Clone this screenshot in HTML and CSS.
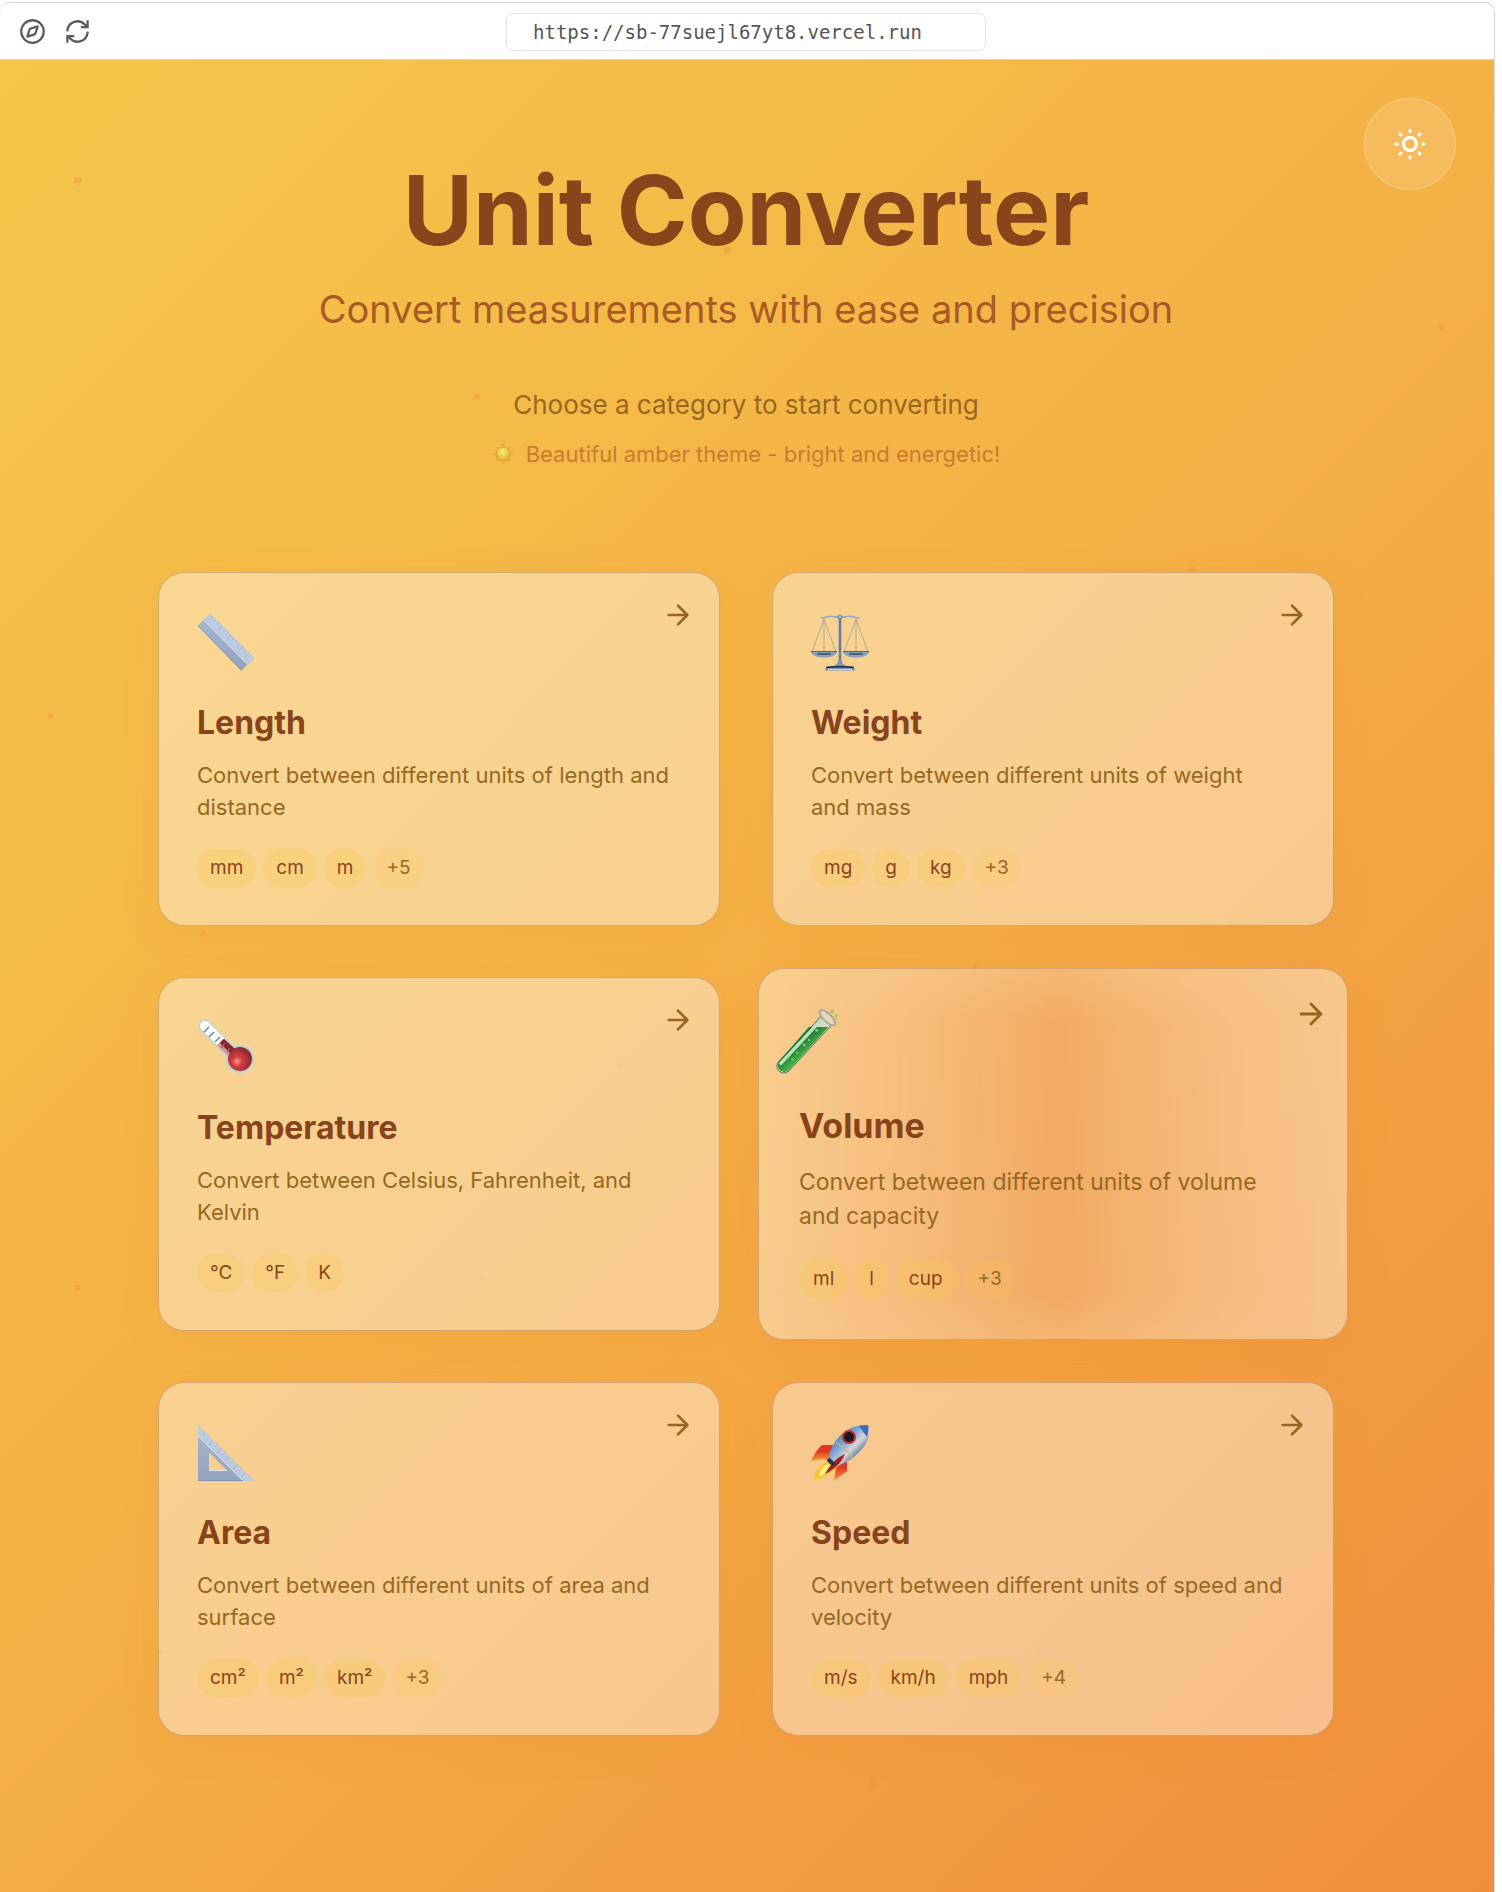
FILE: index.html
```html
<!DOCTYPE html>
<html lang="en">
<head>
<meta charset="utf-8">
<meta name="viewport" content="width=device-width, initial-scale=1">
<title>Unit Converter</title>
<link rel="stylesheet" href="styles.css">
</head>
<body>
<svg class="defs" aria-hidden="true">
  <defs>
    <symbol id="arrow" viewBox="0 0 24 24"><path d="M5 12h14M12 5l7 7-7 7" fill="none" stroke="currentColor" stroke-width="2" stroke-linecap="round" stroke-linejoin="round"/></symbol>
    <linearGradient id="steel" x1="0" y1="0" x2="0" y2="1"><stop offset="0" stop-color="#a9b8cf"/><stop offset="1" stop-color="#93a3bd"/></linearGradient>
    <radialGradient id="bulb" cx=".38" cy=".6" r=".6"><stop offset="0" stop-color="#f29a9a"/><stop offset=".35" stop-color="#d43c3f"/><stop offset="1" stop-color="#8d2a30"/></radialGradient>
    <linearGradient id="liquid" x1="0" y1="0" x2="1" y2="1"><stop offset=".4" stop-color="#1f7a34"/><stop offset=".6" stop-color="#4fc04a"/></linearGradient>
    <linearGradient id="hull" x1="0" y1="0" x2="1" y2="1"><stop offset=".2" stop-color="#3f78c0"/><stop offset=".42" stop-color="#7fa8d8"/><stop offset=".58" stop-color="#d4d8da"/><stop offset=".8" stop-color="#2d4d86"/></linearGradient>
    <linearGradient id="fin" x1="0" y1="0" x2="0" y2="1"><stop offset=".4" stop-color="#e03a22"/><stop offset="1" stop-color="#f5a03a"/></linearGradient>
    <radialGradient id="sunball" cx=".5" cy=".35" r=".6"><stop offset="0" stop-color="#f8ec7c"/><stop offset="1" stop-color="#e8b030"/></radialGradient>
  </defs>
</svg>
<div class="window">
  <header class="toolbar">
    <div class="toolbar-actions">
      <button class="tool" type="button" aria-label="Browse">
        <svg viewBox="0 0 24 24" fill="none" stroke="currentColor" stroke-width="2" stroke-linecap="round" stroke-linejoin="round"><circle cx="12" cy="12" r="10"/><path d="M16.6 7.4l-2 6.4a1.2 1.2 0 0 1-.8.8l-6.4 2 2-6.4a1.2 1.2 0 0 1 .8-.8z"/></svg>
      </button>
      <button class="tool" type="button" aria-label="Reload">
        <svg viewBox="0 0 24 24" fill="none" stroke="currentColor" stroke-width="2" stroke-linecap="square" stroke-linejoin="miter"><path d="M3 11a9 9 0 0 1 15.5-5.2L21 8M21 3v5h-5M21 13a9 9 0 0 1-15.5 5.2L3 16M3 21v-5h5"/></svg>
      </button>
    </div>
    <input class="address" type="text" aria-label="Address" value="https://sb-77suejl67yt8.vercel.run" readonly>
  </header>
  <main class="page">
    <svg class="particles" aria-hidden="true">
      <circle cx="5.2%" cy="6.6%" r="4"/><circle cx="48.7%" cy="10.4%" r="4"/><circle cx="96.5%" cy="14.6%" r="3"/><circle cx="31.9%" cy="18.4%" r="3"/><circle cx="79.8%" cy="27.8%" r="3"/><circle cx="3.4%" cy="35.8%" r="3"/><circle cx="13.6%" cy="47.7%" r="3"/><circle cx="82.3%" cy="47.2%" r="3"/><circle cx="65.3%" cy="49.5%" r="3"/><circle cx="41.5%" cy="54.9%" r="3"/><circle cx="32.3%" cy="66.5%" r="3"/><circle cx="5.2%" cy="67%" r="3"/><circle cx="10.7%" cy="86.9%" r="3"/><circle cx="69.5%" cy="86.9%" r="3"/><circle cx="82.4%" cy="87.6%" r="3"/><circle cx="58.5%" cy="94.1%" r="4"/>
    </svg>
    <button class="theme-toggle" type="button" aria-label="Switch theme">
      <svg viewBox="0 0 32 32" fill="none" stroke="currentColor" stroke-width="3" stroke-linecap="round"><circle cx="16" cy="16" r="6.5"/><path d="M16 2v1.500M16 28.500v1.500M2 16h1.500M28.500 16h1.500M6 6l1 1M25 25l1 1M6 26l1-1M25 7l1-1"/></svg>
    </button>
    <div class="intro">
      <h1>Unit Converter</h1>
      <p class="tagline">Convert measurements with ease and precision</p>
      <p class="prompt">Choose a category to start converting</p>
      <p class="note">
        <svg viewBox="0 0 22 22" aria-hidden="true"><g stroke="#dd9a3a" stroke-width="1" stroke-linecap="round"><path d="M11 1v2M11 19v2M1 11h2M19 11h2M4 4l1.5 1.5M16.5 16.5L18 18M4 18l1.500-1.500M16.500 5.500L18 4"/></g><circle cx="11" cy="11" r="7" fill="url(#sunball)" stroke="#d8932c" stroke-width=".8"/></svg>
        <span>Beautiful amber theme - bright and energetic!</span>
      </p>
    </div>
    <nav class="grid" aria-label="Categories">
      <a class="card" href="#length">
        <span class="card-head">
          <svg class="emoji" viewBox="0 0 58 58" aria-hidden="true"><path d="M1 12.5L13 .5 57 45 44.500 57.500z" fill="url(#steel)"/><path d="M6.500 7L13 .5 57 45l-6.500 6.500z" fill="#bccbe0"/><path d="M6.500 7l44 44.500" stroke="#d3deec"/><path d="M1 12.500l43.500 45" stroke="#7f91b0"/><path d="M16 4l-3 3M19 7l-2 2M22 10l-2 2M25 13l-4 4M28 16l-2 2M31 19l-2 2M34 22l-4 4M37 25l-2 2M40 28l-2 2M43 31l-4 4M46 34l-2 2M49 37l-2 2M52 40l-4 4" stroke="#93a6c4" stroke-width=".7"/></svg>
          <svg class="arrow" aria-hidden="true"><use href="#arrow"/></svg>
        </span>
        <span class="card-title">Length</span>
        <span class="card-text">Convert between different units of length and distance</span>
        <span class="units"><span class="unit">mm</span><span class="unit">cm</span><span class="unit">m</span><span class="unit more">+5</span></span>
      </a>
      <a class="card" href="#weight">
        <span class="card-head">
          <svg class="emoji" viewBox="0 0 58 58" aria-hidden="true"><g fill="none" stroke="#8c9a9f" stroke-width=".7"><path d="M13 6L1 39M13 6l12 33M13 6v33M45 6L33 39M45 6l12 33M45 6v33"/></g><path d="M9.500 5c6-.5 8-2.500 13-1.500 4 1 9 1 13 0 5-1 7 1 13 1.500" fill="none" stroke="#8aa8c8" stroke-width="1.600"/><path d="M29 5v47" stroke="#5e7fa8" stroke-width="2.600"/><circle cx="29" cy="4" r="2" fill="#a9bfd8" stroke="#54749c" stroke-width=".8"/><path d="M0 38.500h26c-1 4-6 6-13 6s-12-2-13-6zM32 38.500h26c-1 4-6 6-13 6s-12-2-13-6z" fill="#86a0be"/><path d="M0 38.500h26M32 38.500h26" stroke="#4c627e" stroke-width="1"/><path d="M6 41h14M38 41h14" stroke="#3d4856" stroke-width="1.400"/><path d="M28 45h2c1 5 2 7 6 8 6 0 8 2 8 4.500H14C14 55 16 53 22 53c4-1 5-3 6-8z" fill="#7b93b2"/><path d="M15 54.500c5-1 23-1 28 0" fill="none" stroke="#1d2b3d" stroke-width="1.500"/><path d="M17 56.500h24" stroke="#c5d4e8"/></svg>
          <svg class="arrow" aria-hidden="true"><use href="#arrow"/></svg>
        </span>
        <span class="card-title">Weight</span>
        <span class="card-text">Convert between different units of weight and mass</span>
        <span class="units"><span class="unit">mg</span><span class="unit">g</span><span class="unit">kg</span><span class="unit more">+3</span></span>
      </a>
      <a class="card" href="#temperature">
        <span class="card-head">
          <svg class="emoji" viewBox="0 0 58 58" aria-hidden="true"><path d="M8 8l31 31" stroke="#b9d3e2" stroke-width="13" stroke-linecap="round"/><circle cx="43" cy="41" r="14" fill="#b9d3e2"/><path d="M8 8l18 18" stroke="#fafcfd" stroke-width="10" stroke-linecap="round"/><path d="M23 24l17 16" stroke="#e39191" stroke-width="9"/><path d="M25 23l16 15" stroke="#8c2027" stroke-width="6"/><circle cx="43" cy="41" r="12" fill="url(#bulb)"/><path d="M12 9l-5 5M17 14l-5 5M23 19l-5 5M28 25l-4 5M33 30l-3 4" stroke="#68798a" stroke-width="1.300"/></svg>
          <svg class="arrow" aria-hidden="true"><use href="#arrow"/></svg>
        </span>
        <span class="card-title">Temperature</span>
        <span class="card-text">Convert between Celsius, Fahrenheit, and Kelvin</span>
        <span class="units"><span class="unit">°C</span><span class="unit">°F</span><span class="unit">K</span></span>
      </a>
      <a class="card card-active" href="#volume">
        <span class="card-head">
          <svg class="emoji" viewBox="0 0 64 68" aria-hidden="true"><path d="M8 59L52 12" stroke="#59806b" stroke-width="15" stroke-linecap="round"/><path d="M8 59L52 12" stroke="#dcd8c8" stroke-width="13" stroke-linecap="round"/><path d="M34 18.500h20L13 63C8 68-1 62 3 54z" fill="url(#liquid)"/><path d="M5 56L46 12" stroke="#b9e3c4" stroke-width="3.500" stroke-linecap="round"/><ellipse cx="53" cy="9" rx="10.500" ry="4" transform="rotate(45 53 9)" fill="#e8d9b8" stroke="#a3a3a0" stroke-width="1.800"/><g fill="#6fdc66"><circle cx="42" cy="22" r="1.500"/><circle cx="34" cy="32" r="1.300"/><circle cx="29" cy="37" r="1.500"/><circle cx="22" cy="45" r="1.200"/><circle cx="17" cy="52" r="1.200"/><circle cx="12" cy="51" r="1"/></g><g fill="#a3c95c"><circle cx="58" cy="2.500" r="2"/><circle cx="62" cy="7" r="1.500"/><circle cx="62" cy="10" r="1"/></g></svg>
          <svg class="arrow" aria-hidden="true"><use href="#arrow"/></svg>
        </span>
        <span class="card-title">Volume</span>
        <span class="card-text">Convert between different units of volume and capacity</span>
        <span class="units"><span class="unit">ml</span><span class="unit">l</span><span class="unit">cup</span><span class="unit more">+3</span></span>
      </a>
      <a class="card" href="#area">
        <span class="card-head">
          <svg class="emoji" viewBox="0 0 58 58" aria-hidden="true"><path d="M1 2v56h56zM12 29.500L30 47.500H12z" fill="url(#steel)" fill-rule="evenodd"/><path d="M1 2v11l45 45h11z" fill="#bccbe0"/><path d="M1 13l45 45" stroke="#d3deec"/><path d="M12 47.500h18" stroke="#dbe5f1"/><path d="M1 57.500h45" stroke="#7f91b8"/><path d="M8 10l-3 3M12 14l-2 2M16 18l-4 4M20 22l-2 2M24 26l-4 4M28 30l-2 2M32 34l-4 4M36 38l-2 2M40 42l-4 4M44 46l-2 2M48 50l-4 4" stroke="#93a6c4" stroke-width=".7"/></svg>
          <svg class="arrow" aria-hidden="true"><use href="#arrow"/></svg>
        </span>
        <span class="card-title">Area</span>
        <span class="card-text">Convert between different units of area and surface</span>
        <span class="units"><span class="unit">cm²</span><span class="unit">m²</span><span class="unit">km²</span><span class="unit more">+3</span></span>
      </a>
      <a class="card" href="#speed">
        <span class="card-head">
          <svg class="emoji" viewBox="0 0 58 58" aria-hidden="true"><path d="M23 22H11Q4 28 0 38l12-2 6 1z" fill="url(#fin)"/><path d="M36 36v12L23 58l2-13z" fill="url(#fin)"/><path d="M17 38C9 41 3 49 3 58c3-3 5-3 8-2 2-4 4-4 6-5 6-3 9-5 9-8z" fill="#f6c62f"/><path d="M17 41c-5 2-8 7-9 12 6-2 12-5 14-9z" fill="#fbf080"/><path d="M57 2c-14-1-26 6-33 17-4 6-6 12-7 18l7 6c10-2 18-7 24-14C57 20 60 12 57 2z" fill="url(#hull)"/><path d="M57 2c-3-.3-6 0-9 1l8 11c1-4 2-8 1-12z" fill="#3b6cb4"/><path d="M25 20c5 2 15 11 17 16" fill="none" stroke="#d8bb60" stroke-width="1.200"/><path d="M34 31c-8 3-16 12-20 20 8-4 16-10 20-20z" fill="#a51c1c"/><circle cx="38" cy="14" r="7" fill="#c32d2b"/><circle cx="38" cy="14" r="5" fill="#17191f"/><path d="M17 36l6 6" stroke="#24344c" stroke-width="4"/></svg>
          <svg class="arrow" aria-hidden="true"><use href="#arrow"/></svg>
        </span>
        <span class="card-title">Speed</span>
        <span class="card-text">Convert between different units of speed and velocity</span>
        <span class="units"><span class="unit">m/s</span><span class="unit">km/h</span><span class="unit">mph</span><span class="unit more">+4</span></span>
      </a>
    </nav>
  </main>
</div>
</body>
</html>
```
FILE: styles.css
```css
* { box-sizing: border-box; }

body {
  margin: 0;
  background: #fff;
  font-family: Inter, "Liberation Sans", sans-serif;
}

.defs { position: absolute; width: 0; height: 0; }

.window {
  display: flex;
  flex-direction: column;
  min-height: 100vh;
  margin-right: 7px;
  padding-top: 2px;
}

.toolbar {
  display: grid;
  grid-template-columns: 1fr minmax(0, 480px) 1fr;
  align-items: center;
  height: 58px;
  padding: 1px 2px 0 0;
  border: 1px solid #d5d5d8;
  border-left: 0;
  border-radius: 10px 10px 0 0;
}

.toolbar-actions {
  display: flex;
  gap: 18px;
  padding-left: 19px;
}

.tool {
  display: grid;
  place-items: center;
  padding: 0;
  border: 0;
  background: none;
  color: #5c5c5c;
}

.tool svg { width: 27px; height: 27px; }

.address {
  width: 100%;
  height: 38px;
  padding: 0 26px;
  border: 1px solid #e3e3e3;
  border-radius: 7px;
  background: #fff;
  color: #555;
  font-family: "DejaVu Sans Mono", monospace;
  font-size: 19px;
}

.page {
  position: relative;
  flex: 1;
  padding: 92px 39px 92px 37px;
  border-right: 1px solid #d5d5d8;
  background: linear-gradient(135deg, #f5c64a 0%, #f4b046 50%, #f08e3d 100%);
}

.particles {
  position: absolute;
  inset: 0;
  width: 100%;
  height: 100%;
  fill: #ef8f3e;
  opacity: 0.35;
}

.theme-toggle {
  position: absolute;
  top: 38px;
  right: 38px;
  display: grid;
  place-items: center;
  width: 92px;
  height: 92px;
  padding: 0;
  border: 1px solid rgba(255, 255, 255, 0.25);
  border-radius: 50%;
  background: rgba(255, 255, 255, 0.12);
  color: #fff;
}

.theme-toggle svg { width: 32px; height: 32px; }

.intro {
  position: relative;
  margin-bottom: 102px;
  text-align: center;
}

h1, p { margin: 0; }

h1 {
  margin-bottom: 16px;
  color: #8a441c;
  font-size: 96px;
  font-weight: 700;
  line-height: 116px;
}

.tagline {
  margin-bottom: 51px;
  color: #a95a24;
  font-size: 38px;
  line-height: 50px;
}

.prompt {
  margin-bottom: 13px;
  color: #97661f;
  font-size: 26px;
  line-height: 40px;
}

.note {
  display: flex;
  align-items: center;
  justify-content: center;
  gap: 12px;
  color: #cc7a30;
  font-size: 22px;
  line-height: 32px;
}

.note svg { width: 22px; height: 22px; }

.grid {
  display: grid;
  grid-template-columns: repeat(2, minmax(0, 1fr));
  gap: 51px 52px;
  max-width: 1176px;
  margin: 0 auto;
}

.card {
  position: relative;
  display: flex;
  flex-direction: column;
  padding: 40px 39px 38px 38px;
  border: 1px solid rgba(150, 80, 60, 0.34);
  border-radius: 26px;
  background: rgba(255, 255, 255, 0.4);
  box-shadow: 0 10px 40px rgba(234, 120, 20, 0.1);
  text-decoration: none;
}

.card-head {
  display: flex;
  align-items: flex-start;
  justify-content: space-between;
  margin-bottom: 32px;
}

.emoji { width: 58px; height: 58px; }

.arrow {
  width: 32px;
  height: 32px;
  margin: -14px -14px 0 0;
  color: #966520;
}

.card-title {
  margin-bottom: 16px;
  color: #88431c;
  font-size: 32px;
  font-weight: 700;
  line-height: 40px;
}

.card-text {
  max-width: 474px;
  margin-bottom: 26px;
  color: #966822;
  font-size: 22px;
  line-height: 32px;
}

.units { display: flex; gap: 7px; }

.unit {
  padding: 0 13px;
  border-radius: 20px;
  background: rgba(248, 200, 80, 0.28);
  color: #8a4420;
  font-size: 19px;
  line-height: 38px;
}

.unit.more {
  background: rgba(248, 200, 80, 0.18);
  color: #966828;
}

.card-active {
  margin: -9px -14px;
  padding: 42px 41px 38px 40px;
  box-shadow: 0 12px 44px rgba(234, 110, 20, 0.14);
}

/* warm sheen that crosses the highlighted card */
.card-active::before {
  content: "";
  position: absolute;
  inset: 0;
  border-radius: 25px;
  background: linear-gradient(90deg, rgba(238, 140, 60, 0) 0%, rgba(238, 140, 60, 0.22) 25%, rgba(238, 140, 60, 0.5) 51%, rgba(238, 140, 60, 0.22) 75%, rgba(238, 140, 60, 0) 100%);
  mask-image: linear-gradient(rgba(0, 0, 0, 0.6), #000 14%, #000 88%, rgba(0, 0, 0, 0.7));
}

.card-active > * { position: relative; }
.card-active .card-head { margin-bottom: 30px; }
.card-active .emoji { width: 64px; height: 66px; margin: -2px 0 0 -24px; }
.card-active .arrow { width: 34px; height: 34px; margin: -14px -22px 0 0; }
.card-active .card-title { margin-bottom: 18px; font-size: 34px; line-height: 42px; }
.card-active .card-text { font-size: 23px; line-height: 34px; }
.card-active .unit { padding: 0 14px; line-height: 40px; }
```
